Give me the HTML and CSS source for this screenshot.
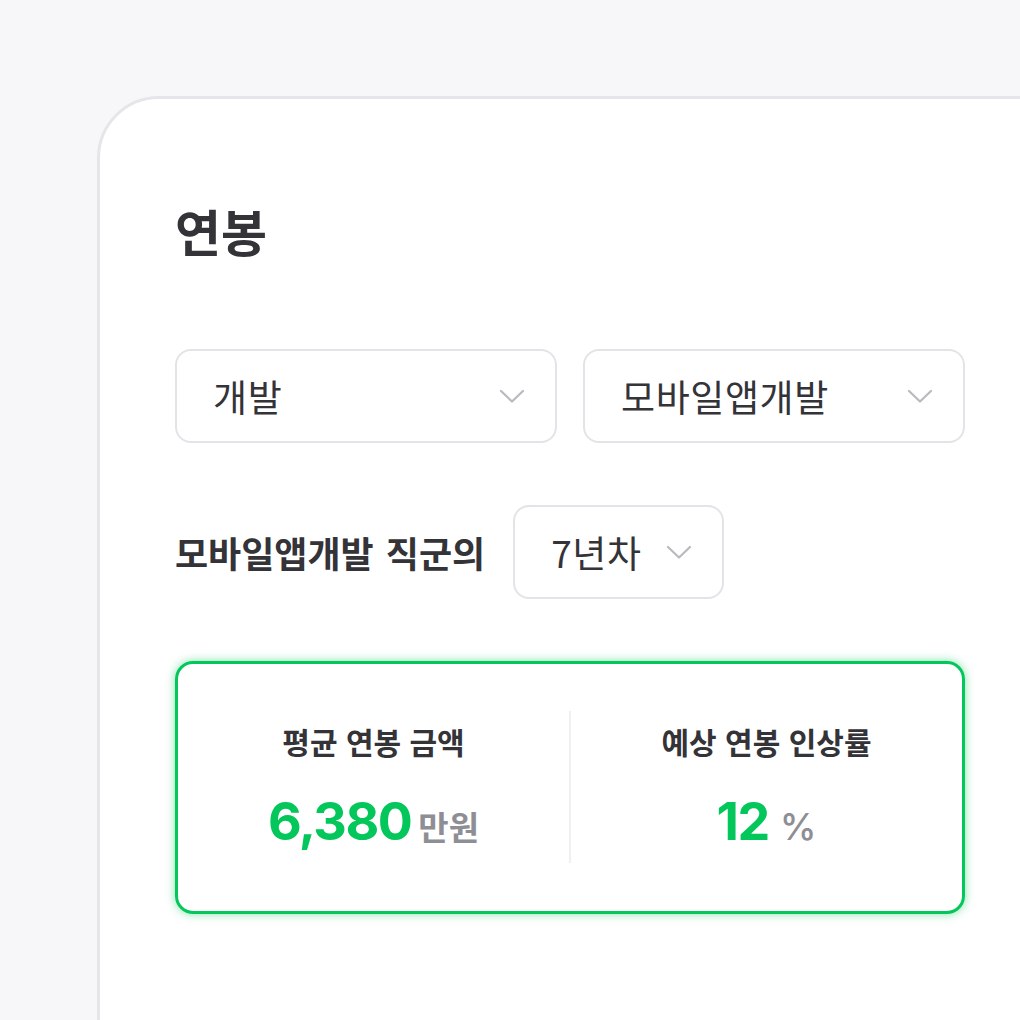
FILE: index.html
```html
<!DOCTYPE html>
<html lang="ko">
<head>
  <meta charset="UTF-8" />
  <meta name="viewport" content="width=device-width, initial-scale=1.0"/>
  <title>연봉</title>
  <link rel="stylesheet" href="styles.css">
</head>
<body>
  <div class="card">
    <h1 class="title">연봉</h1>

    <div class="select-row">
      <div class="select">
        <span>개발</span>
        <svg class="chevron" width="26" height="15" viewBox="0 0 26 15"><polyline points="2,2 13,12.5 24,2" /></svg>
      </div>
      <div class="select">
        <span>모바일앱개발</span>
        <svg class="chevron" width="26" height="15" viewBox="0 0 26 15"><polyline points="2,2 13,12.5 24,2" /></svg>
      </div>
    </div>

    <div class="year-row">
      <span class="year-label">모바일앱개발 직군의</span>
      <div class="select small">
        <span>7년차</span>
        <svg class="chevron" width="26" height="15" viewBox="0 0 26 15"><polyline points="2,2 13,12.5 24,2" /></svg>
      </div>
    </div>

    <div class="result">
      <div class="result-col">
        <div class="result-label">평균 연봉 금액</div>
        <div class="result-value"><strong>6,380</strong><span>만원</span></div>
      </div>
      <div class="divider"></div>
      <div class="result-col">
        <div class="result-label">예상 연봉 인상률</div>
        <div class="result-value"><strong>12</strong><span class="pct">%</span></div>
      </div>
    </div>
  </div>
</body>
</html>
```

FILE: styles.css
```css
body {
  margin: 0;
  padding: 96px 0 0 97px;
  background-color: #f7f7f9;
  font-family: "Inter", "Noto Sans CJK KR", sans-serif;
  color: #333338;
  overflow: hidden;
}

.card {
  width: 1000px;
  height: 1000px;
  box-sizing: border-box;
  background: white;
  border: 3px solid #e6e6ea;
  border-radius: 62px;
  padding: 101px 0 0 75px;
}

.title {
  margin: 0;
  font-size: 50px;
  line-height: 60px;
  font-weight: 700;
  font-family: "Noto Sans CJK KR", sans-serif;
}

.select-row {
  display: flex;
  gap: 26px;
  width: 790px;
  margin-top: 89px;
}

.select {
  flex: 1;
  height: 94px;
  box-sizing: border-box;
  border: 2px solid #e4e4e8;
  border-radius: 16px;
  display: flex;
  align-items: center;
  justify-content: space-between;
  padding: 0 30px 0 36px;
  font-family: "Noto Sans CJK KR", sans-serif;
  font-size: 37px;
  letter-spacing: 0.6px;
  color: #333338;
}

.select.small {
  flex: none;
  gap: 24px;
  padding-right: 30px;
}

.chevron polyline {
  fill: none;
  stroke: #b9b9c0;
  stroke-width: 2.2;
  stroke-linecap: round;
  stroke-linejoin: round;
}

.year-row {
  display: flex;
  align-items: center;
  gap: 28px;
  margin-top: 62px;
}

.year-label {
  font-family: "Noto Sans CJK KR", sans-serif;
  font-size: 36px;
  font-weight: 700;
  word-spacing: 2px;
}

.result {
  width: 790px;
  height: 253px;
  box-sizing: border-box;
  margin-top: 62px;
  border: 3px solid #03c75a;
  border-radius: 18px;
  box-shadow: 0 0 10px rgba(3, 199, 90, 0.5);
  display: flex;
  padding: 47px 0 48px;
}

.divider {
  width: 2px;
  background: #f0f0f2;
}

.result-col {
  flex: 1;
  display: flex;
  flex-direction: column;
  align-items: center;
  padding-top: 11px;
}

.result-label {
  font-family: "Noto Sans CJK KR", sans-serif;
  font-size: 30px;
  line-height: 38px;
  font-weight: 700;
}

.result-value {
  margin-top: 32px;
  display: flex;
  align-items: baseline;
  gap: 7px;
}

.result-value strong {
  font-size: 52px;
  line-height: 60px;
  font-weight: 700;
  letter-spacing: -1.5px;
  color: #03c75a;
}

.result-value span {
  font-family: "Noto Sans CJK KR", sans-serif;
  font-size: 33px;
  font-weight: 700;
  color: #8e8e95;
}

.result-value .pct {
  font-family: "Inter", sans-serif;
  font-size: 37px;
  font-weight: 500;
  margin-left: 4px;
}
```
